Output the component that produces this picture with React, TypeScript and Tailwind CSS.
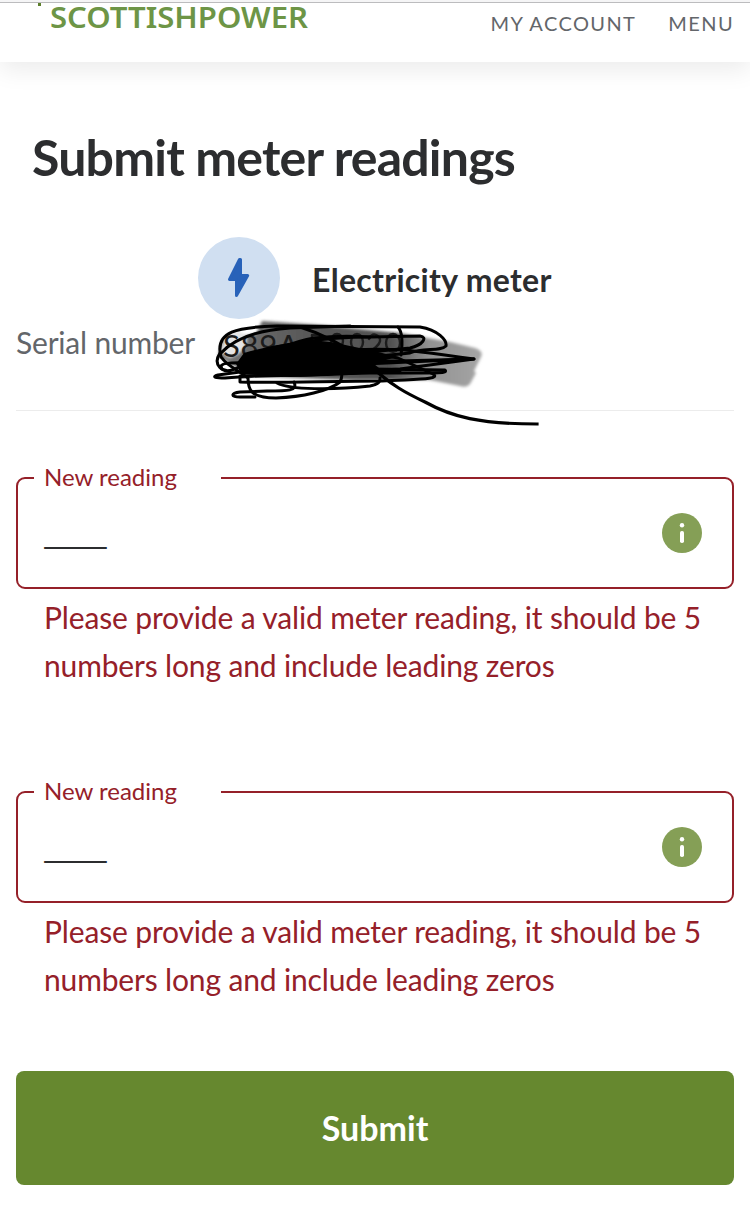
import React from "react";

const ERROR_TEXT = "Please provide a valid meter reading, it should be 5 numbers long and include leading zeros";

function Header() {
  return (
    <header className="h-[62px] border-t-2 border-[#f5f5f6] bg-white shadow-[0_8px_24px_rgba(0,0,0,0.08)]">
      <div className="flex h-[60px] items-start justify-between border-t border-[#bcbcbe] pr-[16px] pl-[38px]">
        <div className="flex items-start">
          <span className="h-[3px] w-[3px] bg-[#5c7f2b]" />
          <svg className="ml-[9px] h-[42px] w-[264px] overflow-visible" viewBox="0 0 264 42">
            <text x="0" y="25" textLength="258" lengthAdjust="spacingAndGlyphs" fill="#6d9546" className="font-['Noto_Sans',sans-serif] text-[29px] leading-none font-semibold">
              SCOTTISHPOWER
            </text>
          </svg>
        </div>
        <nav className="flex gap-[32px] pt-[6px] text-[20px] leading-[28px] tracking-[1.4px] text-[#63666a]">
          <a>MY ACCOUNT</a>
          <a>MENU</a>
        </nav>
      </div>
    </header>
  );
}

function Scribble() {
  return (
    <svg className="absolute top-[-9px] left-[184px] h-[125px] w-[350px]" viewBox="200 310 350 125" fill="none" stroke="#000" strokeLinecap="round" strokeLinejoin="round">
      <defs>
        <filter id="soft" x="-5%" y="-10%" width="110%" height="120%">
          <feGaussianBlur stdDeviation="1.5" />
        </filter>
        <linearGradient id="marker" x1="0" x2="1" y1="0" y2="0">
          <stop offset="0" stopColor="#777" />
          <stop offset="0.3" stopColor="#5a5a5a" />
          <stop offset="0.65" stopColor="#505050" />
          <stop offset="0.8" stopColor="#929292" />
          <stop offset="1" stopColor="#a5a5a5" />
        </linearGradient>
      </defs>
      <path d="M262 321 L318 325 L400 333 L450 342 L475 348 Q484 351 481 357 L474 371 L476 373 L470 384 Q467 388 460 386 L430 380 L350 380 L250 376 L218 356 L222 340 L256 334 Z" fill="url(#marker)" stroke="none" filter="url(#soft)" />
      <path d="M226 335 Q240 326 247 339 Q246 353 229 358 L220 351 Z" fill="#e5e5e5" stroke="none" filter="url(#soft)" />
      <text x="223" y="357" fill="#1c1c1c" stroke="none" textLength="76" className="text-[31px]">S89A</text>
      <g stroke="#1c1c1c" strokeWidth="2.4">
        <path d="M312 335 V354 M312 335 H320" />
        <ellipse cx="337" cy="341" rx="6" ry="7" />
        <ellipse cx="357" cy="342" rx="6" ry="8" />
        <path d="M369 339 Q372 332 378 336 Q383 341 376 347 L370 352" />
        <ellipse cx="393" cy="343" rx="7" ry="9" />
      </g>
      <path d="M244 353 Q275 344 308 341 Q325 340 350 346 L374 351 L398 357 Q380 361 374 364 L384 372 L350 375 L290 377 L242 374 L236 364 Z" fill="#000" stroke="none" />
      <g strokeWidth="3">
        <path d="M221 357 C214 331 238 327 277 326 L420 327 C438 330 447 340 446 346 C440 352 423 347 410 353 L350 359 L240 369" />
        <path d="M221 353 C235 338 259 330 290 328 L350 326" />
        <path d="M300 327 C326 335 344 346 360 357" />
        <path d="M251 354 C277 345 322 337 370 337 L420 336 C428 337 423 345 410 348 L370 352" />
        <path d="M220 353 C212 365 223 373 232 370 C258 360 281 344 314 338 Q340 335 370 337" />
        <path d="M222 369 C217 361 235 363 260 363 L398 361 L474 359 C440 354 421 352 405 350 C350 347 307 353 248 361" />
        <path d="M222 358 C227 366 240 371 248 378 C248 389 250 398 276 398 C302 397 329 391 340 382 C344 375 341 366 330 362" />
        <path d="M240 372 L218 375 C211 377 216 378 225 378 C280 373 335 378 370 369 L445 370 C449 374 433 373 370 373 L241 376" />
        <path d="M240 376 V382 C280 383 331 381 382 381 C413 379 442 380 433 374 L398 358 L363 352" />
        <path d="M277 383 C290 390 333 390 370 386 Q381 384 380 378" />
        <path d="M294 382 C298 391 288 391 267 391 L240 392 C231 393 230 397 240 397 L255 397" />
        <path d="M398 327 Q404 334 401 355" />
        <path d="M343 365 L474 359 L400 369 L300 375" />
        <path d="M250 368 L350 362 M246 373 L400 371" />
      </g>
      <path d="M354 350 L370 365 C390 385 408 394 425 402 C452 417 480 424 537 424" strokeWidth="3.2" strokeLinecap="square" />
    </svg>
  );
}

function InfoIcon() {
  return (
    <svg className="h-[40px] w-[40px]" viewBox="0 0 40 40">
      <circle cx="20" cy="20" r="20" fill="#859f56" />
      <circle cx="20" cy="12.2" r="2.2" fill="#fff" />
      <rect x="18" y="18" width="4" height="12" rx="1.8" fill="#fff" />
    </svg>
  );
}

function ReadingField() {
  return (
    <div className="h-[314px]">
      <fieldset className="h-[126px] rounded-[9px] border-2 border-[#952029] pr-[30px] pl-[16px]">
        <legend className="w-[187px] pl-[10px] text-[24px] leading-[30px] text-[#952029]">
          <span className="relative -top-px">New reading</span>
        </legend>
        <div className="flex items-start justify-between pl-[9px]">
          <span className="pt-[18px] text-[34px] leading-[40px] tracking-[-3.3px] text-[#2c2d2f]">_____</span>
          <span className="mt-[20px]">
            <InfoIcon />
          </span>
        </div>
      </fieldset>
      <p className="mt-[4px] pl-[28px] text-[30px] leading-[48px] tracking-[-0.15px] text-[#952029]">{ERROR_TEXT}</p>
    </div>
  );
}

export default function App() {
  return (
    <div className="min-h-[1222px] w-[750px] overflow-hidden bg-white font-[Lato,sans-serif]">
      <Header />
      <main className="px-[16px]">
        <h1 className="pt-[65px] pl-[16px] text-[50px] leading-[60px] font-bold tracking-[-0.8px] text-[#2c2d2f]">Submit meter readings</h1>

        <div className="mt-[50px] flex h-[82px] items-center pl-[182px]">
          <div className="flex h-[82px] w-[82px] items-center justify-center rounded-full bg-[#d0dff1]">
            <svg className="h-[42px] w-[24px]" viewBox="0 0 24 42">
              <path d="M12.5 2.5 L2.5 22.5 H9.5 V38.5 L20.7 18.5 H13.5 V2.5 Z" fill="#2862b9" stroke="#2862b9" strokeWidth="3" strokeLinejoin="round" />
            </svg>
          </div>
          <h2 className="ml-[32px] pt-[3px] text-[32px] font-bold tracking-[0.3px] text-[#2c2d2f]">Electricity meter</h2>
        </div>

        <div className="relative h-[92px] border-b border-[#ececec]">
          <span className="block pt-[3px] text-[30px] leading-[40px] tracking-[-0.2px] text-[#63666a]">Serial number</span>
          <Scribble />
        </div>

        <div className="mt-[52px]">
          <ReadingField />
          <ReadingField />
        </div>

        <button className="mt-[-20px] h-[114px] w-full rounded-[8px] bg-[#66882f] pb-px text-[34px] font-bold text-white">Submit</button>
      </main>
    </div>
  );
}
